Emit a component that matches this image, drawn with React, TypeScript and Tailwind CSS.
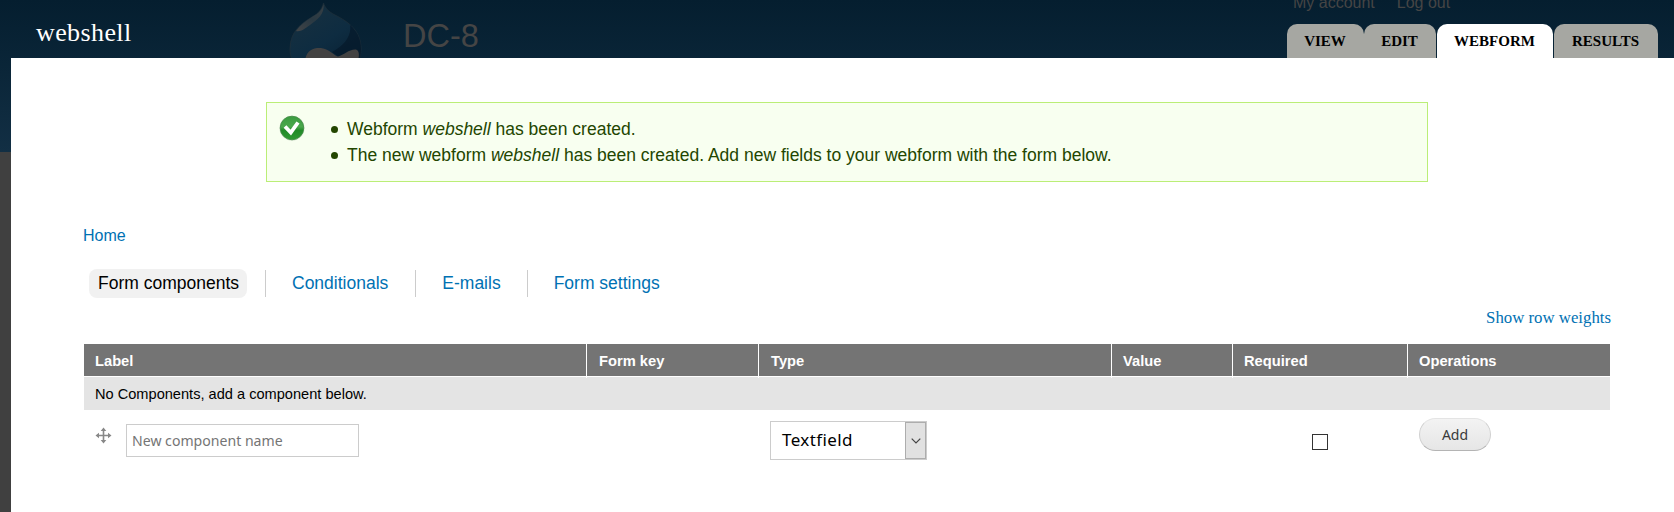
import React from "react";

const SANS = "font-['Liberation_Sans',Arial,sans-serif]";
const SERIF = "font-['Liberation_Serif',Georgia,serif]";
const NOTO = "font-['Noto_Sans',sans-serif]";

function Drop() {
  return (
    <svg className="block h-[58px] w-[76px] shrink-0" viewBox="0 0 76 58">
      <defs>
        <linearGradient id="drop" x1="0.2" y1="0" x2="0.8" y2="1">
          <stop offset="0" stopColor="#17303f" />
          <stop offset="0.5" stopColor="#0e2c41" />
          <stop offset="1" stopColor="#071d2f" />
        </linearGradient>
        <linearGradient id="shine" x1="1" y1="0" x2="0" y2="1">
          <stop offset="0" stopColor="#3c4144" />
          <stop offset="0.5" stopColor="#2c3a43" />
          <stop offset="1" stopColor="#474747" />
        </linearGradient>
      </defs>
      <path d="M35.500 3C37 8 41 12 47 15C61 22 73 31 73 49C73 60 66 80 38 80C12 80 2 63 2 49C2 31 14 23 24 17C31 13 34 9 35.500 3Z" fill="url(#drop)" stroke="#202f39" strokeWidth="0.700" />
      <path d="M62 25C69 31 73 39 73 49C73 56 71 64 68 69L44 52C56 46 64 36 62 25Z" fill="#061a2b" opacity="0.75" />
      <path d="M35.500 4C37 14 29 20 22 25C16 29 13 32 8 31C12 25 18 21 24 17C31 13 34 10 35.500 4Z" fill="url(#shine)" opacity="0.9" />
      <path d="M17 60C19 50 25 47.500 33 48C42 49 46 56 50 56.500C56 55 61 49 68 49.500C72 51 71 56 70 62Z" fill="#434242" />
    </svg>
  );
}

function CheckIcon() {
  return (
    <svg className="mt-[-1px] block h-[26px] w-[26px] shrink-0" viewBox="0 0 26 26">
      <defs>
        <linearGradient id="ok" x1="0" y1="0" x2="0" y2="1">
          <stop offset="0" stopColor="#3a9c40" />
          <stop offset="0.45" stopColor="#4aa84c" />
          <stop offset="0.6" stopColor="#228a28" />
          <stop offset="1" stopColor="#2f9a33" />
        </linearGradient>
      </defs>
      <circle cx="13" cy="13.200" r="12.500" fill="#c9d6c4" opacity="0.7" />
      <circle cx="13" cy="13" r="11.800" fill="url(#ok)" stroke="#3f8a43" strokeWidth="0.800" />
      <path d="M6 11.500L11.800 17.500L19 7.500" fill="none" stroke="#fff" strokeWidth="3.800" />
    </svg>
  );
}

function MoveIcon() {
  return (
    <svg className="mt-[3px] block h-[17px] w-[17px] shrink-0" viewBox="0 0 17 17">
      <path d="M8.500 2V15M2 8.500H15" stroke="#888" strokeWidth="1.600" />
      <path d="M8.500 0.500L11.300 4H5.700ZM8.500 16.500L11.300 13H5.700ZM0.500 8.500L4 5.700V11.300ZM16.500 8.500L13 5.700V11.300Z" fill="#888" />
    </svg>
  );
}

function Message({ children }: { children: React.ReactNode }) {
  return (
    <li className="flex items-center">
      <span className="mr-[9px] h-[7px] w-[7px] rounded-full bg-[#234600]" />
      <span>{children}</span>
    </li>
  );
}

const tabs = [
  { label: "VIEW", cls: "w-[77px] bg-[#a6a7a2]" },
  { label: "EDIT", cls: "w-[72px] mr-px bg-[#a6a7a2]" },
  { label: "WEBFORM", cls: "w-[116px] mr-px bg-white" },
  { label: "RESULTS", cls: "w-[104px] bg-[#a6a7a2]" },
];

const columns = [
  { label: "Label", cls: "border-r pl-[11px]" },
  { label: "Form key", cls: "border-r pl-[12px]" },
  { label: "Type", cls: "border-r pl-[12px]" },
  { label: "Value", cls: "border-r pl-[11px]" },
  { label: "Required", cls: "border-r pl-[11px]" },
  { label: "Operations", cls: "pl-[11px]" },
];
const GRID = "grid grid-cols-[503px_172px_353px_121px_175px_202px]";

export default function App() {
  return (
    <div className={`${SANS} h-[512px] w-[1674px] overflow-hidden bg-[#404040] text-black`}>
      <div className="flex h-[152px] flex-col bg-linear-to-b from-[#051e2f] to-[#122f44]">
        <header className="flex h-[58px] shrink-0 items-start">
          <h1 className={`${SERIF} w-[251px] pl-[36px] pt-[18px] text-[26px] leading-[30px] tracking-[0.4px] text-white`}>
            webshell
          </h1>
          <div className="w-[37px]" />
          <Drop />
          <div className="w-[923px] pl-[39px] pt-[16px] text-[32.500px] leading-[40px] text-[#454545]">DC-8</div>
          <div className="flex flex-col">
            <nav className="flex h-6 gap-[22px] pl-[6px] text-[16px] leading-[20px] text-[#454545]">
              <span className="mt-[-7px]">My account</span>
              <span className="mt-[-7px]">Log out</span>
            </nav>
            <nav className="flex h-[34px]">
              {tabs.map((t) => (
                <a
                  key={t.label}
                  className={`${SERIF} ${t.cls} rounded-t-[10px] pr-px pt-[7px] text-center text-[15px] font-bold leading-[20px]`}
                >
                  {t.label}
                </a>
              ))}
            </nav>
          </div>
        </header>
        <main className="ml-[11px] flex h-[454px] shrink-0 flex-col bg-white pl-[72px]">
          <section className="ml-[183px] mt-[44px] flex h-[80px] w-[1162px] shrink-0 border border-[#be7] bg-[#f8fff0] pl-[12px] pt-[13px] text-[17.500px] leading-[26px] text-[#234600]">
            <CheckIcon />
            <ul className="ml-[26px]">
              <Message>
                Webform <em>webshell</em> has been created.
              </Message>
              <Message>
                The new webform <em>webshell</em> has been created. Add new fields to your webform with the form below.
              </Message>
            </ul>
          </section>
          <a className="mt-[44px] text-[16px] leading-[20px] text-[#0071b3]">Home</a>
          <nav className="mt-[23px] flex h-[29px] shrink-0 items-center text-[17.500px] leading-[27px] text-[#0071b3]">
            <span className="ml-[6px] h-[29px] w-[158px] rounded-[8px] bg-[#f1f1f1] pl-[9px] leading-[29px] text-black">
              Form components
            </span>
            <span className="ml-[18px] border-l border-[#ccc] pl-[26px]">Conditionals</span>
            <span className="ml-[27px] border-l border-[#ccc] pl-[26px]">E-mails</span>
            <span className="ml-[26px] border-l border-[#ccc] pl-[26px]">Form settings</span>
          </nav>
          <div className={`${SERIF} mt-[9px] w-[1528px] text-right text-[16.800px] leading-[22px] text-[#0071b3]`}>
            Show row weights
          </div>
          <div className="ml-px mt-[15px] w-[1526px] text-[14.600px]">
            <div className={`${GRID} h-[32px] bg-[#747474] text-[14.700px] font-bold leading-[34px] text-white`}>
              {columns.map((c) => (
                <div key={c.label} className={`${c.cls} border-white`}>
                  {c.label}
                </div>
              ))}
            </div>
            <div className="mt-px h-[33px] bg-[#e4e4e4] pl-[11px] leading-[34px]">
              No Components, add a component below.
            </div>
            <div className={`${GRID} pt-[8px]`}>
              <div className="flex pl-[11px] pt-[6px]">
                <MoveIcon />
                <div className={`${NOTO} ml-[14px] h-[33px] w-[233px] border border-[#ccc] pl-[5px] text-[14.100px] leading-[31px] text-[#757575]`}>
                  New component name
                </div>
              </div>
              <div />
              <div className="pl-[11px] pt-[3px]">
                <div className={`${NOTO} flex h-[39px] w-[157px] justify-between border border-[#ccc] pl-[11px] text-[17px] leading-[36px] tracking-[0.4px]`}>
                  Textfield
                  <span className="flex w-[21px] items-center justify-center border border-[#adadad] bg-[#e1e1e1]">
                    <svg className="h-[6px] w-[10px]" viewBox="0 0 10 6">
                      <path d="M0.700 0.700L5 5L9.300 0.700" fill="none" stroke="#444" strokeWidth="1.200" />
                    </svg>
                  </span>
                </div>
              </div>
              <div />
              <div className="pl-[79px] pt-[16px]">
                <div className="h-4 w-4 border border-[#333]" />
              </div>
              <div className="pl-[11px]">
                <button className={`${NOTO} block h-[33px] w-[72px] rounded-full border border-[#d0d0d0] border-t-[#e4e4e4] border-b-[#b4b4b4] bg-linear-to-b from-[#f3f3f3] to-[#e6e6e6] text-[14px] leading-[30px] text-[#3a3a3a]`}>
                  Add
                </button>
              </div>
            </div>
          </div>
        </main>
      </div>
    </div>
  );
}
